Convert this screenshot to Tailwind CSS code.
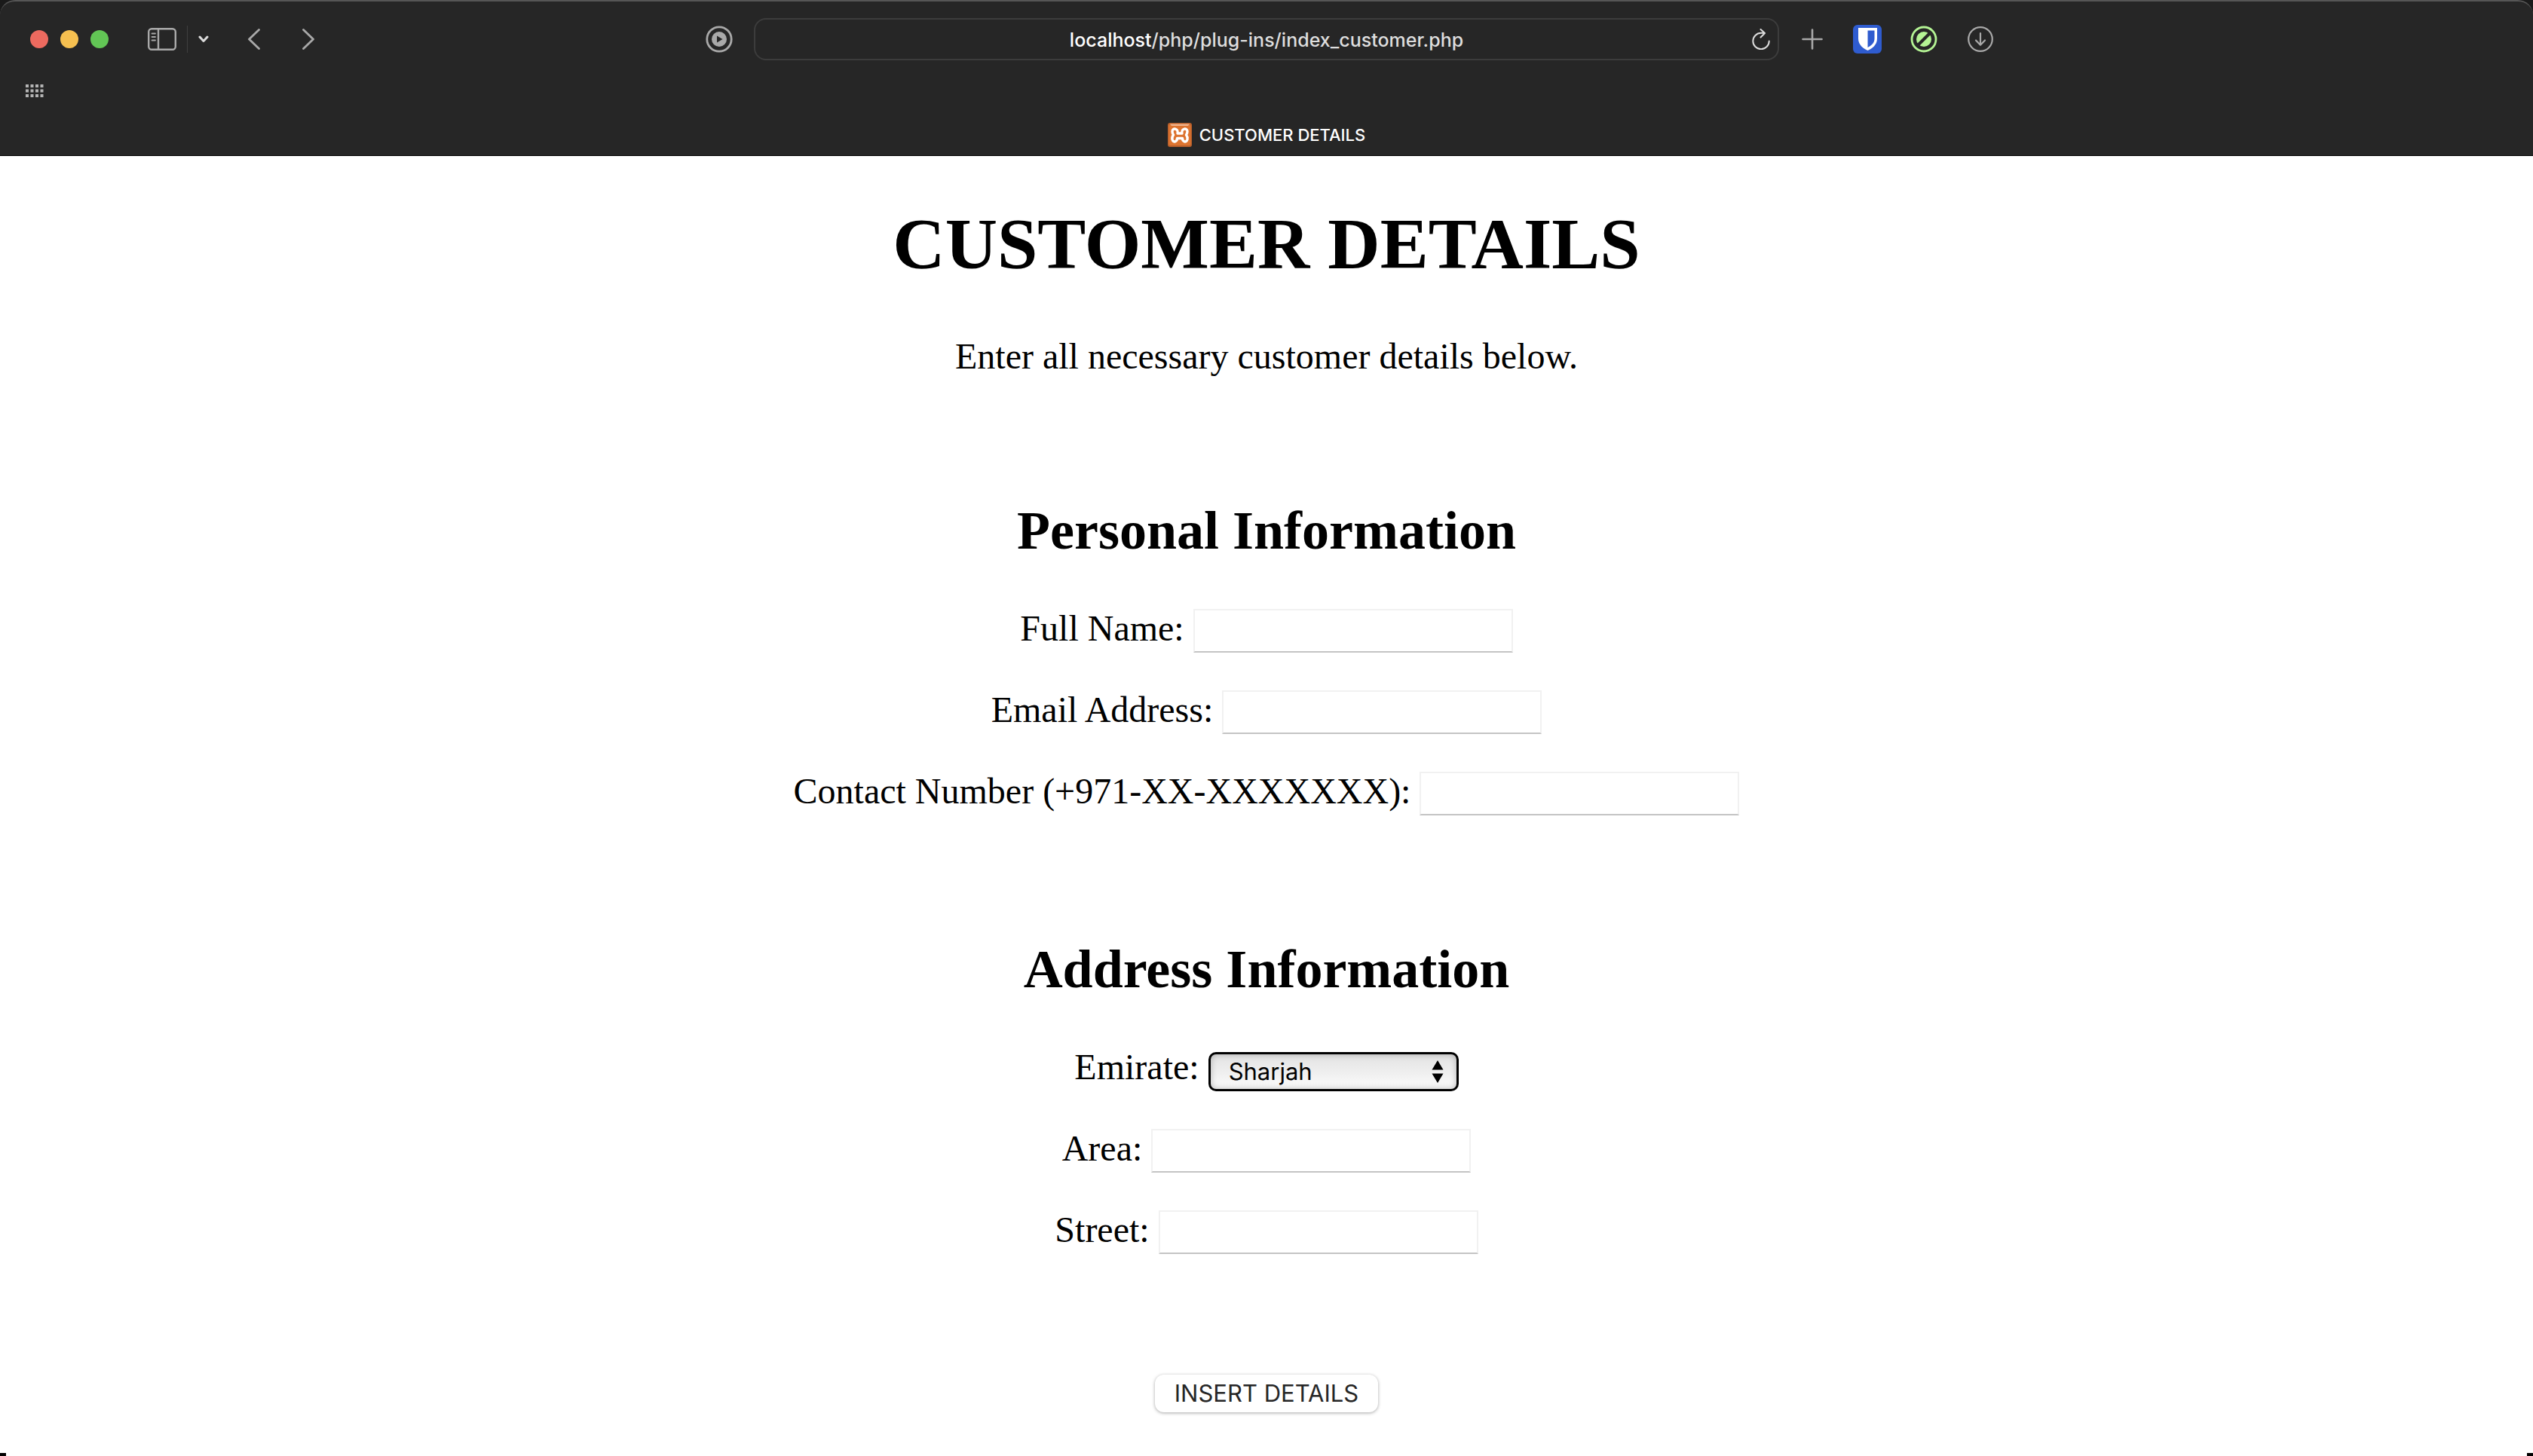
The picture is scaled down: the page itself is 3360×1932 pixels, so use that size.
<!DOCTYPE html>
<html lang="en">
<head>
<meta charset="utf-8">
<title>CUSTOMER DETAILS</title>
<script src="https://cdn.jsdelivr.net/npm/@tailwindcss/browser@4"></script>
</head>
<body class="relative flex min-h-screen flex-col bg-white text-black">
  <header class="bg-[#1a1a1a] font-['Inter',sans-serif]">
    <div class="flex h-[207px] flex-col rounded-t-[20px] border-t-2 border-b border-t-[#565656] border-b-black bg-[#262626]">
      <!-- Toolbar -->
      <div class="grid h-[100px] grid-cols-[1fr_40.5%_1fr] items-center">
        <div class="flex items-center justify-between pr-7 pl-10">
          <div class="flex items-center">
            <div class="flex gap-4">
              <button aria-label="Close" class="size-6 rounded-full bg-[#ed6a5f]"></button>
              <button aria-label="Minimise" class="size-6 rounded-full bg-[#f6c050]"></button>
              <button aria-label="Zoom" class="size-6 rounded-full bg-[#62c655]"></button>
            </div>
            <button aria-label="Sidebar" class="ml-[52px]">
              <svg class="block h-[30px] w-[38px]" viewBox="0 0 38 30" fill="none" stroke="#a9a9a9" stroke-width="2.400"><rect x="1.200" y="1.200" width="35.600" height="27.600" rx="4"/><path d="M14 1V29"/><path d="M5.500 7.500H10M5.500 12H10M5.500 16.500H10" stroke-width="1.800" stroke-linecap="round"/></svg>
            </button>
            <div class="ml-3.5 h-9 w-px bg-[#404040]"></div>
            <button aria-label="Tab groups" class="ml-3.5">
              <svg class="block h-[10px] w-[14px]" viewBox="0 0 14 10" fill="none" stroke="#dcdcdc" stroke-width="3" stroke-linecap="round" stroke-linejoin="round"><path d="M2 2L7 7.500L12 2"/></svg>
            </button>
            <button aria-label="Back" class="ml-[52px]">
              <svg class="block h-7 w-4" viewBox="0 0 16 28" fill="none" stroke="#a9a9a9" stroke-width="2.800" stroke-linecap="round" stroke-linejoin="round"><path d="M14.500 1.500L1.500 14L14.500 26.500"/></svg>
            </button>
            <button aria-label="Forward" class="ml-14">
              <svg class="block h-7 w-4" viewBox="0 0 16 28" fill="none" stroke="#a9a9a9" stroke-width="2.800" stroke-linecap="round" stroke-linejoin="round"><path d="M1.500 1.500L14.500 14L1.500 26.500"/></svg>
            </button>
          </div>
          <button aria-label="Media controls">
            <svg class="block size-9" viewBox="0 0 36 36"><circle cx="18" cy="18" r="16.200" fill="none" stroke="#a9a9a9" stroke-width="2.800"/><circle cx="18" cy="18" r="10" fill="#a9a9a9"/><path d="M15 13.500V22.500L22.500 18Z" fill="#262626"/></svg>
          </button>
        </div>
        <div class="relative flex h-14 items-center justify-center rounded-2xl border-2 border-[#3c3c3c]">
          <a href="#" class="pt-0.5 text-[25px] leading-8 font-medium text-[#dedede]"><span class="text-white">localhost</span>/php/plug-ins/index_customer.php</a>
          <button aria-label="Reload" class="absolute right-2.5">
            <svg class="block h-[28px] w-6" viewBox="0 0 24 28" fill="none" stroke="#dcdcdc" stroke-width="2" stroke-linecap="round" stroke-linejoin="round"><path d="M22.700 16.500A10.700 10.700 0 1 1 12 5.800H16.500M11.500 1L17 6L11.500 11.500"/></svg>
          </button>
        </div>
        <div class="flex items-center pl-[30px]">
          <button aria-label="New tab">
            <svg class="block size-7" viewBox="0 0 28 28" stroke="#a9a9a9" stroke-width="2.600" stroke-linecap="round"><path d="M14 1.500V26.500M1.500 14H26.500"/></svg>
          </button>
          <button aria-label="Bitwarden" class="ml-10">
            <svg class="block size-[38px]" viewBox="0 0 38 38"><rect width="38" height="38" rx="6" fill="#2f5ccf"/><path d="M7 4H32V18C32 27 25 31.500 19.500 34C14 31.500 7 27 7 18Z" fill="#fff"/><path d="M19.500 7.500H28.500V18C28.500 24.500 24 27.500 19.500 30Z" fill="#2f5ccf"/></svg>
          </button>
          <button aria-label="Content blocker" class="ml-[38px]">
            <svg class="block size-9" viewBox="0 0 36 36"><circle cx="18" cy="18" r="16" fill="none" stroke="#b4f494" stroke-width="2.800"/><circle cx="18" cy="18" r="10" fill="#b4f494"/><path d="M9 27L27 9" stroke="#262626" stroke-width="4"/></svg>
          </button>
          <button aria-label="Downloads" class="ml-10">
            <svg class="block size-[34px]" viewBox="0 0 34 34" fill="none" stroke="#a9a9a9" stroke-width="2.200" stroke-linecap="round" stroke-linejoin="round"><circle cx="17" cy="17" r="15.800"/><path d="M17 9V24.500M11 18.500L17 24.700L23 18.500"/></svg>
          </button>
        </div>
      </div>
      <!-- Favourites bar -->
      <div class="flex h-9 items-center px-[34px]">
        <button aria-label="Favourites">
          <svg class="block h-[17px] w-6" viewBox="0 0 24 17" fill="#b4b4b4"><path d="M0 0h4v4H0zM6.500 0h4v4h-4zM13 0h4v4h-4zM19.500 0h4v4h-4zM0 6.500h4v4H0zM6.500 6.500h4v4h-4zM13 6.500h4v4h-4zM19.500 6.500h4v4h-4zM0 13h4v4H0zM6.500 13h4v4h-4zM13 13h4v4h-4zM19.500 13h4v4h-4z"/></svg>
        </button>
      </div>
      <!-- Tab title -->
      <div class="flex flex-1 items-center justify-center gap-2.5 pt-3.5">
        <svg class="block size-8" viewBox="0 0 32 32"><rect width="32" height="32" rx="3" fill="#b9602c"/><rect x="1.500" y="2" width="29" height="28" rx="2" fill="#dd7430"/><path d="M3 1.500H29L27 4H5Z" fill="#f0b48c"/><path d="M16 14H13C14.500 7 6 6 6 11.500C6 14 7.500 16 7.500 16C6 18 5.500 20 6 22C7.500 27 12.500 25 12.500 20.500H19.500C19.500 25 24.500 27 26 22C26.500 20 26 18 24.500 16C24.500 16 26 14 26 11.500C26 6 17.500 7 19 14Z" fill="none" stroke="#fff" stroke-width="3.400" stroke-linecap="round" stroke-linejoin="round"/></svg>
        <span class="text-[22px] leading-8 font-medium text-white">CUSTOMER DETAILS</span>
      </div>
    </div>
  </header>

  <main class="flex flex-col items-center pt-[62px] font-['Liberation_Serif',serif]">
    <h1 class="text-[96px] leading-[110px] font-bold">CUSTOMER DETAILS</h1>
    <p class="mt-[66px] text-5xl leading-14">Enter all necessary customer details below.</p>

    <form class="flex flex-col items-center text-5xl leading-14">
      <h2 class="mt-[163px] text-7xl leading-20 font-bold">Personal Information</h2>
      <div class="mt-[62px] flex flex-col items-center gap-12">
        <div class="flex h-15 gap-3">
          <label for="name">Full Name:</label>
          <input id="name" type="text" class="h-[58px] w-[424px] self-end border-2 border-[#f1f1f1] border-b-[#c4c4c4] px-2 text-[32px] outline-none">
        </div>
        <div class="flex h-15 gap-3">
          <label for="email">Email Address:</label>
          <input id="email" type="text" class="h-[58px] w-[424px] self-end border-2 border-[#f1f1f1] border-b-[#c4c4c4] px-2 text-[32px] outline-none">
        </div>
        <div class="flex h-15 gap-3">
          <label for="phone">Contact Number (+971-XX-XXXXXXX):</label>
          <input id="phone" type="text" class="h-[58px] w-[424px] self-end border-2 border-[#f1f1f1] border-b-[#c4c4c4] px-2 text-[32px] outline-none">
        </div>
      </div>

      <h2 class="mt-[164px] text-7xl leading-20 font-bold">Address Information</h2>
      <div class="mt-[62px] flex flex-col items-center gap-12">
        <div class="flex h-15 gap-3">
          <label for="emirate">Emirate:</label>
          <div class="relative self-end">
            <select id="emirate" class="block h-[52px] w-[332px] appearance-none rounded-[10px] border-3 border-black bg-linear-to-b from-[#e2e2e2] to-[#fbfbfb] pl-6 font-['Inter',sans-serif] text-[31px] leading-10 shadow-[inset_0_0_8px_rgba(0,0,0,0.25)] outline-none">
              <option>Sharjah</option>
            </select>
            <svg class="pointer-events-none absolute top-[11px] right-5 h-[30px] w-4" viewBox="0 0 16 30"><path d="M8 0L15.500 12.500H0.500ZM0.500 17.500H15.500L8 30Z"/></svg>
          </div>
        </div>
        <div class="flex h-15 gap-3">
          <label for="area">Area:</label>
          <input id="area" type="text" class="h-[58px] w-[424px] self-end border-2 border-[#f1f1f1] border-b-[#c4c4c4] px-2 text-[32px] outline-none">
        </div>
        <div class="flex h-15 gap-3">
          <label for="street">Street:</label>
          <input id="street" type="text" class="h-[58px] w-[424px] self-end border-2 border-[#f1f1f1] border-b-[#c4c4c4] px-2 text-[32px] outline-none">
        </div>
      </div>

      <button type="button" class="mt-40 h-[50px] rounded-xl bg-white px-[26px] font-['Inter',sans-serif] text-[31px] leading-10 text-[#262626] shadow-[0_1px_4px_rgba(0,0,0,0.35)]">INSERT DETAILS</button>
    </form>
  </main>

  <!-- Rounded window corners at the bottom edge -->
  <div class="absolute bottom-0 left-0 h-1 w-2 bg-black"></div>
  <div class="absolute right-0 bottom-0 h-1 w-2 bg-black"></div>
</body>
</html>
